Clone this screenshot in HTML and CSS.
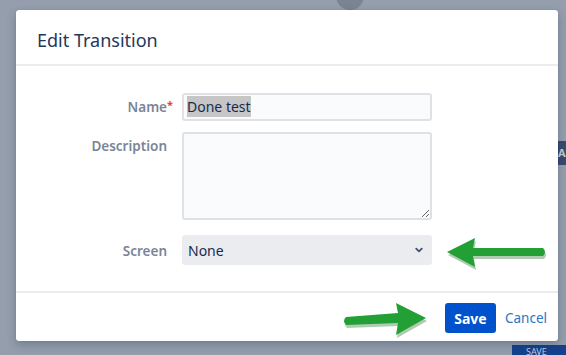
FILE: index.html
```html
<!DOCTYPE html>
<html lang="en">
<head>
  <meta charset="UTF-8">
  <meta name="viewport" content="width=device-width, initial-scale=1.0">
  <title>Edit Transition</title>
  <link rel="stylesheet" href="styles.css">
</head>
<body>
  <div class="backdrop-dot"></div>
  <div class="backdrop-tag">AS</div>
  <div class="backdrop-btn">SAVE</div>

  <div id="dialog">
    <div class="dialog-header">
      <h2>Edit Transition</h2>
    </div>

    <form class="dialog-body">
      <div class="row">
        <label for="name">Name<span class="req">*</span></label>
        <div class="field">
          <input type="text" id="name" class="text" value="">
          <span class="value"><span class="selected">Done test</span></span>
        </div>
      </div>

      <div class="row row-desc">
        <label for="description">Description</label>
        <div class="field">
          <textarea id="description"></textarea>
        </div>
      </div>

      <div class="row row-screen">
        <label for="screen">Screen</label>
        <div class="field">
          <div class="select" id="screen">
            <span>None</span>
            <svg width="10" height="10" viewBox="0 0 10 10"><path d="M2.2 3.6 L5 6.4 L7.8 3.6" fill="none" stroke="#42526e" stroke-width="1.8" stroke-linecap="round" stroke-linejoin="round"/></svg>
          </div>
        </div>
      </div>
    </form>

    <div class="dialog-footer">
      <button type="button" class="btn-save">Save</button>
      <a href="#" class="cancel">Cancel</a>
    </div>
  </div>

  <!-- annotation arrows drawn over the screenshot -->
  <svg class="arrow arrow-left" width="110" height="40" viewBox="0 0 110 40">
    <path d="M4 20 L32 6 L30 16 L100 16 Q104 20 100 24 L30 24 L32 35 Z" fill="#1f6a26" opacity="0.35" transform="translate(1 2)"/>
    <path d="M4 19 L32 5 L30 15 L100 15 Q104 19 100 23 L30 23 L32 34 Z" fill="#23a035"/>
  </svg>
  <svg class="arrow arrow-right" width="100" height="44" viewBox="0 0 100 44">
    <path d="M88 19 L58 4 L60 14 L8 18 Q4 22 8 26 L60 24 L58 36 Z" fill="#1f6a26" opacity="0.35" transform="translate(1 2)"/>
    <path d="M88 18 L58 3 L60 13 L8 17 Q4 21 8 25 L60 23 L58 35 Z" fill="#23a035"/>
  </svg>
</body>
</html>
```

FILE: styles.css
```css
body {
  margin: 0;
  padding: 10px 0 0 16px;
  width: 566px;
  height: 355px;
  box-sizing: border-box;
  overflow: hidden;
  background-color: #959eac;
  font-family: "Noto Sans", "Open Sans", sans-serif;
  color: #172b4d;
  position: relative;
}

.backdrop-dot {
  position: absolute;
  left: 336px;
  top: -18px;
  width: 28px;
  height: 28px;
  border-radius: 50%;
  background-color: #7b8493;
}

.backdrop-tag {
  position: absolute;
  left: 558px;
  top: 141px;
  width: 8px;
  height: 24px;
  overflow: hidden;
  background-color: #3a4a6b;
  color: #c5cbd6;
  font-size: 11px;
  font-weight: 700;
  line-height: 24px;
}

.backdrop-btn {
  position: absolute;
  left: 512px;
  top: 345px;
  width: 54px;
  height: 10px;
  overflow: hidden;
  background-color: #16418c;
  color: #c3cde0;
  font-size: 9px;
  line-height: 14px;
  padding-left: 14px;
  box-sizing: border-box;
}

#dialog {
  width: 542px;
  height: 331px;
  background-color: #fff;
  border-radius: 3px;
  box-shadow: 0 0 1px rgba(9, 30, 66, 0.3), 0 4px 10px rgba(9, 30, 66, 0.25);
  display: flex;
  flex-direction: column;
  position: relative;
  z-index: 1;
}

.dialog-header {
  height: 54px;
  border-bottom: 2px solid #ebecf0;
  padding-left: 21px;
  display: flex;
  align-items: center;
}

.dialog-header h2 {
  margin: 6px 0 0;
  font-size: 18px;
  font-weight: 400;
  color: #253858;
}

.dialog-body {
  flex: 1;
  padding-top: 27px;
}

.row {
  display: grid;
  grid-template-columns: 151px 250px;
  column-gap: 15px;
}

.row-desc {
  margin-top: 11px;
}

.row-screen {
  margin-top: 15px;
}

.row-screen label {
  padding-top: 6px;
}

label {
  text-align: right;
  font-size: 13.5px;
  font-weight: 600;
  color: #7a8598;
  line-height: 20px;
  padding-top: 4px;
  position: relative;
}

.req {
  position: absolute;
  right: -6px;
  top: 2px;
  color: #de350b;
  font-size: 11px;
}

.field {
  position: relative;
}

.text {
  width: 250px;
  height: 28px;
  box-sizing: border-box;
  border: 2px solid #dfe1e6;
  border-radius: 3px;
  background-color: #fafbfc;
  margin: 0;
  display: block;
}

.value {
  position: absolute;
  left: 5px;
  top: 3px;
  font-size: 14px;
  line-height: 22px;
  color: #172b4d;
}

.selected {
  background-color: #c6c6c6;
  padding: 1px 0;
}

textarea {
  display: block;
  width: 250px;
  height: 88px;
  box-sizing: border-box;
  border: 2px solid #dfe1e6;
  border-radius: 3px;
  background-color: #fafbfc;
  margin: 0;
  resize: vertical;
}

.select {
  width: 250px;
  height: 30px;
  box-sizing: border-box;
  background-color: #ebecf0;
  border-radius: 3px;
  display: flex;
  align-items: center;
  justify-content: space-between;
  padding: 0 8px 0 6px;
  font-size: 14px;
  color: #172b4d;
}

.dialog-footer {
  height: 48px;
  border-top: 2px solid #ebecf0;
  display: flex;
  align-items: center;
  justify-content: flex-end;
  padding-right: 11px;
  gap: 9px;
}

.btn-save {
  background-color: #0052cc;
  color: #fff;
  font-family: inherit;
  font-size: 14px;
  font-weight: 700;
  height: 30px;
  width: 51px;
  padding: 0;
  border: none;
  border-radius: 3px;
  margin-top: 2px;
}

.cancel {
  color: #2b74c3;
  font-size: 13.5px;
  text-decoration: none;
  margin-top: 2px;
}

.arrow {
  position: absolute;
  z-index: 2;
}

.arrow-left {
  left: 443px;
  top: 233px;
}

.arrow-right {
  left: 338px;
  top: 300px;
}
```
